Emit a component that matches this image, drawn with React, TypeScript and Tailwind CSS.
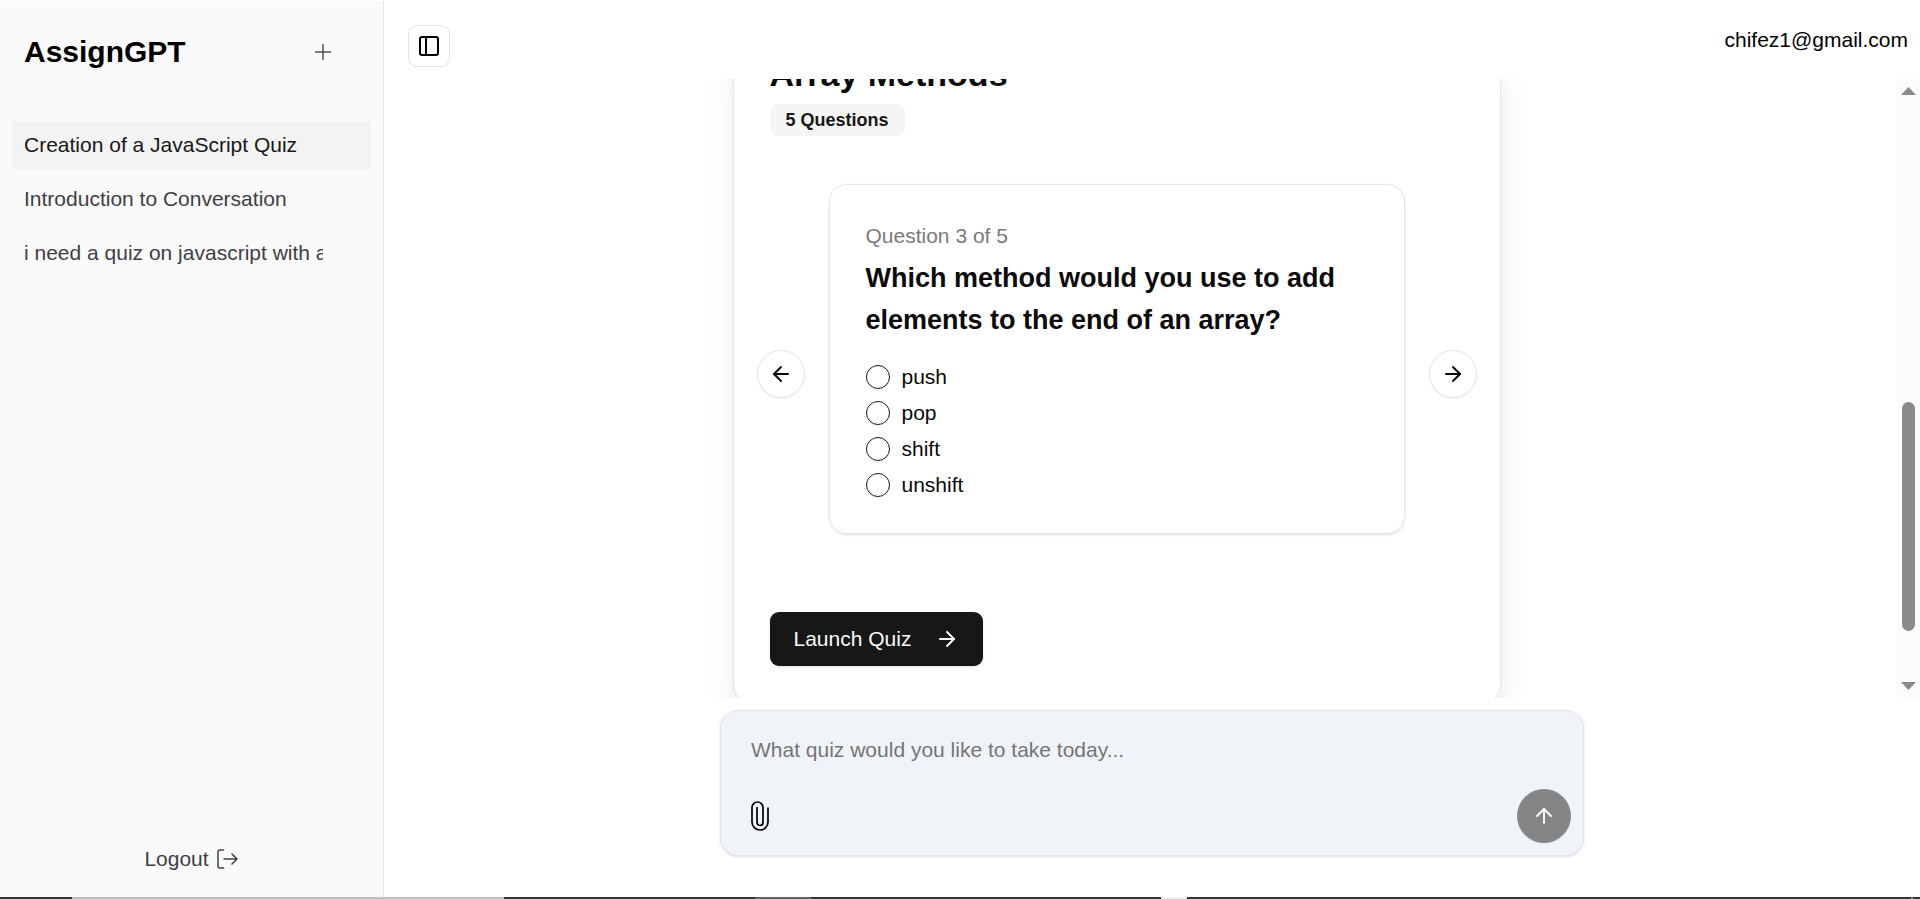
import React from "react";
import { ArrowLeft, ArrowRight, ArrowUp, PanelLeft } from "lucide-react";

const chats = [
  { title: "Creation of a JavaScript Quiz", active: true },
  { title: "Introduction to Conversation", active: false },
  { title: "i need a quiz on javascript with array", active: false },
];

const options = ["push", "pop", "shift", "unshift"];

const stripSegments = [
  { size: 72, color: "#333436" },
  { size: 432, color: "#c0c0c0" },
  { size: 251, color: "#333436" },
  { size: 56, color: "#626262" },
  { size: 350, color: "#333436" },
  { size: 26, color: "#f2f2f2" },
  { size: 724, color: "#333436" },
  { size: 2, color: "#808080" },
  { size: 7, color: "#333436" },
];

function PlusIcon() {
  return (
    <svg className="size-6" viewBox="0 0 24 24" fill="none" stroke="currentColor" strokeWidth="1.5" strokeLinecap="round" aria-hidden="true">
      <path d="M12 4.5v15m7.5-7.5h-15" />
    </svg>
  );
}

function LogoutIcon() {
  return (
    <svg className="size-6" viewBox="0 0 24 24" fill="none" stroke="currentColor" strokeWidth="1.5" strokeLinecap="round" strokeLinejoin="round" aria-hidden="true">
      <path d="M8.500 3H5a2 2 0 0 0-2 2v14a2 2 0 0 0 2 2h3.500" />
      <path d="M9 12h12.500M17 7l5 5-5 5" />
    </svg>
  );
}

function ClipIcon() {
  return (
    <svg className="h-[30px] w-[18px]" viewBox="0 0 18 30" fill="none" stroke="currentColor" strokeWidth="1.7" strokeLinecap="round" aria-hidden="true">
      <path d="M17 7v14a8 8 0 0 1-16 0V6.500a5.500 5.500 0 0 1 11 0V21.500a3 3 0 0 1-6 0V6.500" />
    </svg>
  );
}

function Sidebar() {
  return (
    <aside className="flex w-96 shrink-0 flex-col border-r border-[#e4e4e7] bg-[#fafafa] px-3">
      <div className="flex items-center justify-between pt-6 pr-9 pl-3">
        <h1 className="text-[30px] leading-[54px] font-bold text-black">AssignGPT</h1>
        <button type="button" aria-label="New chat" className="text-[#52525b]">
          <PlusIcon />
        </button>
      </div>
      <nav className="mt-[42px] flex flex-col gap-1.5">
        {chats.map((c) => (
          <a
            key={c.title}
            href="#"
            className={
              c.active
                ? "flex h-12 items-center bg-[#f3f3f3] pr-12 pl-3 text-[#18181b]"
                : "flex h-12 items-center pr-12 pl-3 text-[#3f3f46]"
            }
          >
            <span className="overflow-hidden whitespace-nowrap">{c.title}</span>
          </a>
        ))}
      </nav>
      <button type="button" className="mt-auto mb-[23px] flex items-center justify-center gap-1.5 text-[#3f3f46]">
        Logout
        <LogoutIcon />
      </button>
    </aside>
  );
}

function RoundButton({ label, children }: { label: string; children: React.ReactNode }) {
  return (
    <button
      type="button"
      aria-label={label}
      className="flex size-12 shrink-0 items-center justify-center rounded-full border border-[#e5e5e5] bg-white text-[#0a0a0a] shadow-xs"
    >
      {children}
    </button>
  );
}

function QuestionCard() {
  return (
    <fieldset className="mb-[30px] w-xl rounded-[18px] border border-[#e5e5e5] bg-white p-9 shadow">
      <p className="text-[#7a7a7a]">Question 3 of 5</p>
      <h3 className="mt-1.5 text-[27px] leading-[42px] font-bold">
        Which method would you use to add elements to the end of an array?
      </h3>
      <div className="mt-6 flex flex-col gap-3">
        {options.map((o) => (
          <label key={o} className="flex items-center gap-3 leading-6">
            <input
              type="radio"
              name="answer"
              value={o}
              className="size-6 appearance-none rounded-full border border-[#171717] shadow-xs checked:border-8"
            />
            {o}
          </label>
        ))}
      </div>
    </fieldset>
  );
}

function QuizCard() {
  return (
    <article className="-mb-[5px] w-3xl rounded-[18px] border border-[#e5e5e5] bg-white py-9 text-[#0a0a0a] shadow-[0_30px_38px_-8px_rgba(0,0,0,0.1),0_12px_15px_-9px_rgba(0,0,0,0.1)]">
      <div className="flex flex-col items-start gap-3 px-9">
        <h2 className="text-[34px] leading-9 font-bold">Array Methods</h2>
        <span className="rounded-[9px] bg-[#f5f5f5] px-4 py-1 text-lg leading-6 font-bold text-[#171717]">5 Questions</span>
      </div>
      <div className="mt-12 flex items-center justify-center gap-6">
        <RoundButton label="Previous question">
          <ArrowLeft size={24} />
        </RoundButton>
        <QuestionCard />
        <RoundButton label="Next question">
          <ArrowRight size={24} />
        </RoundButton>
      </div>
      <div className="mt-12 px-9">
        <button type="button" className="flex h-[54px] items-center gap-6 rounded-[9px] bg-[#171717] px-6 font-medium text-[#fafafa] shadow-sm">
          Launch Quiz
          <ArrowRight size={24} />
        </button>
      </div>
    </article>
  );
}

function ScrollTrack() {
  return (
    <div className="flex w-[23px] shrink-0 flex-col items-center justify-between bg-[#fcfcfc] py-2" aria-hidden="true">
      <svg className="h-2 w-[15px]" viewBox="0 0 15 8" fill="#8a8a8a">
        <path d="M7.500 0L15 8H0z" />
      </svg>
      <div className="flex w-[13px] flex-1 flex-col">
        <div className="grow-[307]" />
        <div className="grow-[229] rounded-full bg-[#8a8a8a]" />
        <div className="grow-[51]" />
      </div>
      <svg className="h-2 w-[15px]" viewBox="0 0 15 8" fill="#8a8a8a">
        <path d="M0 0H15L7.500 8z" />
      </svg>
    </div>
  );
}

function Composer() {
  return (
    <form
      className="mx-auto mt-3 mb-[41px] flex w-full max-w-[864px] flex-col rounded-[18px] border border-[#e4e4e7] bg-[#f0f4f9] shadow"
      onSubmit={(e) => e.preventDefault()}
    >
      <input
        type="text"
        aria-label="Quiz prompt"
        placeholder="What quiz would you like to take today..."
        className="mx-[30px] my-6 h-[30px] bg-transparent text-black outline-none placeholder:text-[#757575]"
      />
      <div className="flex items-center justify-between pr-3 pb-3 pl-[30px]">
        <button type="button" aria-label="Attach file" className="text-black">
          <ClipIcon />
        </button>
        <button type="submit" aria-label="Send" className="flex size-[54px] items-center justify-center rounded-full bg-[#848587] text-[#f5f7fa] shadow-xs">
          <ArrowUp size={24} />
        </button>
      </div>
    </form>
  );
}

export default function App() {
  return (
    <div className="flex h-screen flex-col overflow-hidden bg-white font-['Liberation_Sans',Arial,sans-serif] text-[21px] leading-[30px] text-black">
      <div className="mt-px flex min-h-0 flex-1">
        <Sidebar />
        <main className="flex min-w-0 flex-1 flex-col">
          <header className="flex h-[78px] shrink-0 items-start justify-between pt-6 pr-3 pl-6">
            <button
              type="button"
              aria-label="Toggle sidebar"
              className="flex size-[42px] items-center justify-center rounded-[9px] border border-[#e4e4e7] bg-white"
            >
              <PanelLeft size={24} />
            </button>
            <span>chifez1@gmail.com</span>
          </header>
          <section className="flex min-h-0 flex-1">
            <div className="flex flex-1 justify-center overflow-hidden">
              <div className="flex w-full max-w-[864px] flex-col items-start justify-end px-6">
                <QuizCard />
              </div>
            </div>
            <ScrollTrack />
          </section>
          <Composer />
        </main>
      </div>
      <div className="flex h-0.5 shrink-0" aria-hidden="true">
        {stripSegments.map((s, i) => (
          <div key={i} style={{ flexGrow: s.size, backgroundColor: s.color }} />
        ))}
      </div>
    </div>
  );
}
